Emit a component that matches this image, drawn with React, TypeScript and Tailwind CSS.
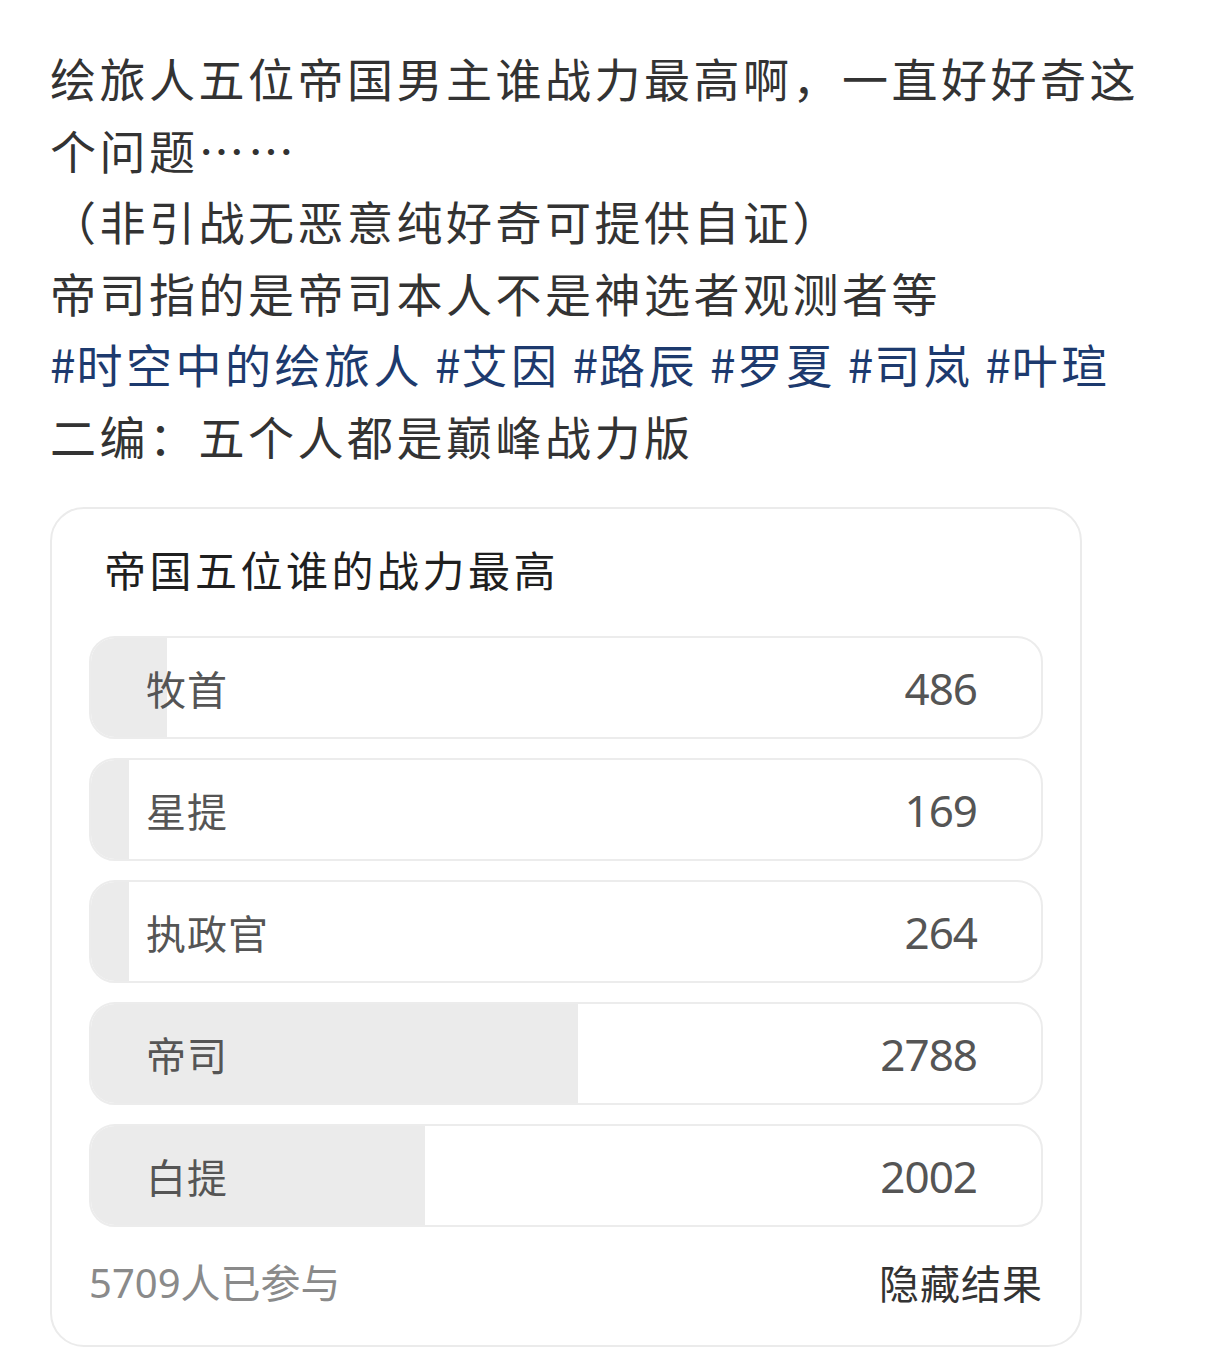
export default function App() {
  const options = [
    { name: "牧首", votes: 486, fill: 76 },
    { name: "星提", votes: 169, fill: 38 },
    { name: "执政官", votes: 264, fill: 38 },
    { name: "帝司", votes: 2788, fill: 487 },
    { name: "白提", votes: 2002, fill: 334 },
  ];
  const tags = ["时空中的绘旅人", "艾因", "路辰", "罗夏", "司岚", "叶瑄"];

  return (
    <div
      className="w-[1216px] min-h-[1364px] bg-white px-[50px] pt-[42px] text-[#333333]"
      style={{ fontFamily: '"Noto Sans CJK SC", "Noto Sans", sans-serif' }}
    >
      {/* post body */}
      <div className="text-[46px] leading-[71.5px] tracking-[3.5px]">
        <p>绘旅人五位帝国男主谁战力最高啊，一直好好奇这个问题……</p>
        <p>（非引战无恶意纯好奇可提供自证）</p>
        <p>帝司指的是帝司本人不是神选者观测者等</p>
        <p className="whitespace-nowrap text-[#1d3a6e]">
          {tags.map((t, i) => (
            <span key={t} className={i > 0 ? "ml-[12px]" : ""}>
              <span className="tracking-[1px]">#</span>
              {t}
            </span>
          ))}
        </p>
        <p>二编：五个人都是巅峰战力版</p>
      </div>

      {/* poll card */}
      <div className="mt-[36px] w-[1032px] rounded-[34px] border-2 border-[#ebebeb] px-[37px] pt-[32px] pb-[34px]">
        <h3 className="pl-[15px] text-[42px] leading-[56px] font-normal tracking-[3.5px] text-[#1f1f1f]">
          帝国五位谁的战力最高
        </h3>

        <div className="mt-[39px] flex flex-col gap-[19px]">
          {options.map((o) => (
            <div
              key={o.name}
              className="relative h-[103px] overflow-hidden rounded-[26px] border-2 border-[#ececec] bg-white"
            >
              <div
                className="absolute inset-y-0 left-0 bg-[#ebebeb]"
                style={{ width: o.fill }}
              />
              <div className="relative flex h-full items-center justify-between pl-[55px] pr-[64px]">
                <span className="text-[40px] tracking-[1px] text-[#555555]">{o.name}</span>
                <span
                  className="text-[44px] tracking-[-1px] text-[#555555]"
                  style={{ fontFamily: '"Noto Sans", sans-serif' }}
                >
                  {o.votes}
                </span>
              </div>
            </div>
          ))}
        </div>

        <div className="mt-[26px] flex items-center justify-between">
          <span className="text-[40px] leading-[56px] text-[#8a8a8a]">
            <span style={{ fontFamily: '"Noto Sans", sans-serif' }}>5709</span>人已参与
          </span>
          <span className="text-[40px] leading-[56px] tracking-[1px] text-[#333333]">隐藏结果</span>
        </div>
      </div>
    </div>
  );
}
